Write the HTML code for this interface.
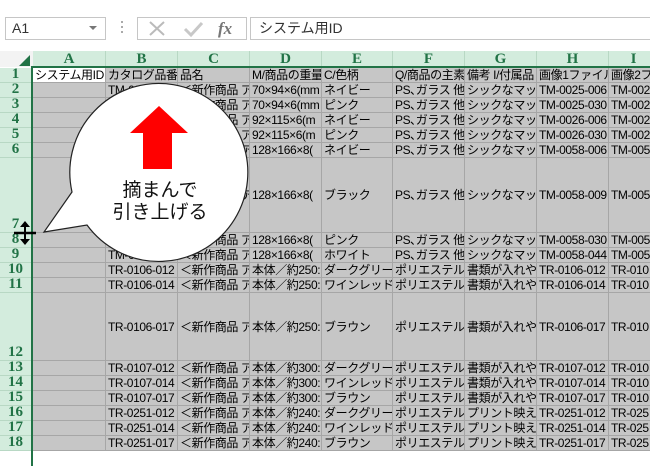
<!DOCTYPE html>
<html><head><meta charset="utf-8">
<style>
*{margin:0;padding:0;box-sizing:border-box}
body{width:650px;height:450px;overflow:hidden;background:#fff;position:relative;font-family:"Liberation Sans","Noto Sans CJK JP",sans-serif}
.box{position:absolute;border:1px solid #c6c6c6;background:#fff}
.rh{position:absolute;left:0;width:31px;background:#d3ecdd;border-bottom:1px solid #b8d8c4;color:#217346;font:bold 15px "Liberation Serif",serif;text-align:center;display:flex;align-items:flex-end;justify-content:center;line-height:15px}
.ch{position:absolute;top:51px;height:16px;background:#d3ecdd;border-right:1px solid #b8d8c4;color:#217346;font:bold 15px "Liberation Serif",serif;text-align:center;line-height:16px}
.row{position:absolute;left:33px;display:flex}
.c{height:100%;background:#c6c6c6;border-right:1px solid #a6a6a6;border-bottom:1px solid #a6a6a6;white-space:nowrap;overflow:hidden;font-size:12px;line-height:14px;color:#000;padding-left:2px;display:flex;align-items:center;font-family:"Liberation Sans","Noto Sans CJK JP",sans-serif;letter-spacing:-0.4px}
.c:nth-child(1){width:73px}.c:nth-child(2){width:72px}.c:nth-child(3){width:72px}.c:nth-child(4){width:72px}.c:nth-child(5){width:71px}.c:nth-child(6){width:72px}.c:nth-child(7){width:72px}.c:nth-child(8){width:72px}.c:nth-child(9){width:50px}
</style></head><body>
<div class="box" style="left:5px;top:17px;width:101px;height:23px;font-size:14px;line-height:21px;padding-left:6px;color:#333">A1<span style="position:absolute;right:8px;top:8px;border-left:4px solid transparent;border-right:4px solid transparent;border-top:4px solid #777"></span></div>
<div style="position:absolute;left:121px;top:21px;width:2px;height:14px;background:repeating-linear-gradient(#aaa 0 2px,transparent 2px 5px)"></div>
<div class="box" style="left:137px;top:17px;width:110px;height:23px"></div>
<svg style="position:absolute;left:137px;top:17px" width="110" height="23"><path d="M13,5 L27,18 M27,5 L13,18" stroke="#bbb" stroke-width="2"/><path d="M48,12 L54,18 L65,6" stroke="#c8c8c8" stroke-width="3" fill="none"/><text x="81" y="17" font-family="Liberation Serif,serif" font-style="italic" font-weight="bold" font-size="17" fill="#777">fx</text></svg>
<div class="box" style="left:250px;top:17px;width:410px;height:23px;font-size:14px;line-height:21px;padding-left:8px;color:#333;font-family:'Liberation Sans','Noto Sans CJK JP',sans-serif">システム用ID</div>
<div style="position:absolute;left:0;top:51px;width:33px;height:16px;background:#f3f3f3"></div>
<div style="position:absolute;left:19px;top:55px;width:0;height:0;border-left:11px solid transparent;border-bottom:11px solid #217346"></div>
<div class="ch" style="left:33px;width:73px">A</div><div class="ch" style="left:106px;width:72px">B</div><div class="ch" style="left:178px;width:72px">C</div><div class="ch" style="left:250px;width:72px">D</div><div class="ch" style="left:322px;width:71px">E</div><div class="ch" style="left:393px;width:72px">F</div><div class="ch" style="left:465px;width:72px">G</div><div class="ch" style="left:537px;width:72px">H</div><div class="ch" style="left:609px;width:50px">I</div>
<div style="position:absolute;left:33px;top:66px;width:620px;height:2px;background:#217346"></div>

<div class="rh" style="top:68px;height:15px">1</div><div class="rh" style="top:83px;height:15px">2</div><div class="rh" style="top:98px;height:15px">3</div><div class="rh" style="top:113px;height:15px">4</div><div class="rh" style="top:128px;height:15px">5</div><div class="rh" style="top:143px;height:15px">6</div><div class="rh" style="top:158px;height:75px">7</div><div class="rh" style="top:233px;height:15px">8</div><div class="rh" style="top:248px;height:15px">9</div><div class="rh" style="top:263px;height:15px">10</div><div class="rh" style="top:278px;height:15px">11</div><div class="rh" style="top:293px;height:68px">12</div><div class="rh" style="top:361px;height:15px">13</div><div class="rh" style="top:376px;height:15px">14</div><div class="rh" style="top:391px;height:15px">15</div><div class="rh" style="top:406px;height:15px">16</div><div class="rh" style="top:421px;height:15px">17</div><div class="rh" style="top:436px;height:15px">18</div>

<div class="row" style="top:68px;height:15px"><div class="c" style="background:#fff">システム用ID</div><div class="c">カタログ品番</div><div class="c">品名</div><div class="c">M/商品の重量</div><div class="c">C/色柄</div><div class="c">Q/商品の主素材</div><div class="c">備考 I/付属品</div><div class="c">画像1ファイル</div><div class="c">画像2ファ</div></div>
<div class="row" style="top:83px;height:15px"><div class="c"></div><div class="c">TM-0025-006</div><div class="c">＜新作商品 ア</div><div class="c">70×94×6(mm</div><div class="c">ネイビー</div><div class="c">PS､ガラス 他</div><div class="c">シックなマット</div><div class="c">TM-0025-006</div><div class="c">TM-002</div></div>
<div class="row" style="top:98px;height:15px"><div class="c"></div><div class="c">TM-0025-030</div><div class="c">＜新作商品 ア</div><div class="c">70×94×6(mm</div><div class="c">ピンク</div><div class="c">PS､ガラス 他</div><div class="c">シックなマット</div><div class="c">TM-0025-030</div><div class="c">TM-002</div></div>
<div class="row" style="top:113px;height:15px"><div class="c"></div><div class="c">TM-0026-006</div><div class="c">＜新作商品 ア</div><div class="c">92×115×6(m</div><div class="c">ネイビー</div><div class="c">PS､ガラス 他</div><div class="c">シックなマット</div><div class="c">TM-0026-006</div><div class="c">TM-002</div></div>
<div class="row" style="top:128px;height:15px"><div class="c"></div><div class="c">TM-0026-030</div><div class="c">＜新作商品 ア</div><div class="c">92×115×6(m</div><div class="c">ピンク</div><div class="c">PS､ガラス 他</div><div class="c">シックなマット</div><div class="c">TM-0026-030</div><div class="c">TM-002</div></div>
<div class="row" style="top:143px;height:15px"><div class="c"></div><div class="c">TM-0058-006</div><div class="c">＜新作商品 ア</div><div class="c">128×166×8(</div><div class="c">ネイビー</div><div class="c">PS､ガラス 他</div><div class="c">シックなマット</div><div class="c">TM-0058-006</div><div class="c">TM-005</div></div>
<div class="row" style="top:158px;height:75px"><div class="c"></div><div class="c">TM-0058-009</div><div class="c">＜新作商品 ア</div><div class="c">128×166×8(</div><div class="c">ブラック</div><div class="c">PS､ガラス 他</div><div class="c">シックなマット</div><div class="c">TM-0058-009</div><div class="c">TM-005</div></div>
<div class="row" style="top:233px;height:15px"><div class="c"></div><div class="c">TM-0058-030</div><div class="c">＜新作商品 ア</div><div class="c">128×166×8(</div><div class="c">ピンク</div><div class="c">PS､ガラス 他</div><div class="c">シックなマット</div><div class="c">TM-0058-030</div><div class="c">TM-005</div></div>
<div class="row" style="top:248px;height:15px"><div class="c"></div><div class="c">TM-0058-044</div><div class="c">＜新作商品 ア</div><div class="c">128×166×8(</div><div class="c">ホワイト</div><div class="c">PS､ガラス 他</div><div class="c">シックなマット</div><div class="c">TM-0058-044</div><div class="c">TM-005</div></div>
<div class="row" style="top:263px;height:15px"><div class="c"></div><div class="c">TR-0106-012</div><div class="c">＜新作商品 ア</div><div class="c">本体／約250:</div><div class="c">ダークグリーン</div><div class="c">ポリエステル</div><div class="c">書類が入れや</div><div class="c">TR-0106-012</div><div class="c">TR-010</div></div>
<div class="row" style="top:278px;height:15px"><div class="c"></div><div class="c">TR-0106-014</div><div class="c">＜新作商品 ア</div><div class="c">本体／約250:</div><div class="c">ワインレッド</div><div class="c">ポリエステル</div><div class="c">書類が入れや</div><div class="c">TR-0106-014</div><div class="c">TR-010</div></div>
<div class="row" style="top:293px;height:68px"><div class="c"></div><div class="c">TR-0106-017</div><div class="c">＜新作商品 ア</div><div class="c">本体／約250:</div><div class="c">ブラウン</div><div class="c">ポリエステル</div><div class="c">書類が入れや</div><div class="c">TR-0106-017</div><div class="c">TR-010</div></div>
<div class="row" style="top:361px;height:15px"><div class="c"></div><div class="c">TR-0107-012</div><div class="c">＜新作商品 ア</div><div class="c">本体／約300:</div><div class="c">ダークグリーン</div><div class="c">ポリエステル</div><div class="c">書類が入れや</div><div class="c">TR-0107-012</div><div class="c">TR-010</div></div>
<div class="row" style="top:376px;height:15px"><div class="c"></div><div class="c">TR-0107-014</div><div class="c">＜新作商品 ア</div><div class="c">本体／約300:</div><div class="c">ワインレッド</div><div class="c">ポリエステル</div><div class="c">書類が入れや</div><div class="c">TR-0107-014</div><div class="c">TR-010</div></div>
<div class="row" style="top:391px;height:15px"><div class="c"></div><div class="c">TR-0107-017</div><div class="c">＜新作商品 ア</div><div class="c">本体／約300:</div><div class="c">ブラウン</div><div class="c">ポリエステル</div><div class="c">書類が入れや</div><div class="c">TR-0107-017</div><div class="c">TR-010</div></div>
<div class="row" style="top:406px;height:15px"><div class="c"></div><div class="c">TR-0251-012</div><div class="c">＜新作商品 ア</div><div class="c">本体／約240:</div><div class="c">ダークグリーン</div><div class="c">ポリエステル</div><div class="c">プリント映えす</div><div class="c">TR-0251-012</div><div class="c">TR-025</div></div>
<div class="row" style="top:421px;height:15px"><div class="c"></div><div class="c">TR-0251-014</div><div class="c">＜新作商品 ア</div><div class="c">本体／約240:</div><div class="c">ワインレッド</div><div class="c">ポリエステル</div><div class="c">プリント映えす</div><div class="c">TR-0251-014</div><div class="c">TR-025</div></div>
<div class="row" style="top:436px;height:15px"><div class="c"></div><div class="c">TR-0251-017</div><div class="c">＜新作商品 ア</div><div class="c">本体／約240:</div><div class="c">ブラウン</div><div class="c">ポリエステル</div><div class="c">プリント映えす</div><div class="c">TR-0251-017</div><div class="c">TR-025</div></div>

<div style="position:absolute;left:31px;top:66px;width:2px;height:400px;background:#217346"></div>

<svg style="position:absolute;left:0;top:0" width="650" height="450">
<path d="M72,192 L44,232 L87,225 A89,89 0 1 0 72,192 Z" fill="#fff" stroke="#222" stroke-width="1.2"/>
<path d="M159,106 L188,133 L172,133 L172,169 L143,169 L143,133 L130,133 Z" fill="#ff0000"/>
<text x="160" y="196" text-anchor="middle" font-family="Noto Sans CJK JP,sans-serif" font-size="19" fill="#111">摘まんで</text>
<text x="160" y="218" text-anchor="middle" font-family="Noto Sans CJK JP,sans-serif" font-size="19" fill="#111">引き上げる</text>
<path d="M14,233 H36" stroke="#000" stroke-width="2.5"/>
<path d="M25,225 V242" stroke="#000" stroke-width="2"/>
<path d="M20,227 L25,221 L30,227 Z M20,239 L25,245 L30,239 Z" fill="#000"/>
</svg>
</body></html>
